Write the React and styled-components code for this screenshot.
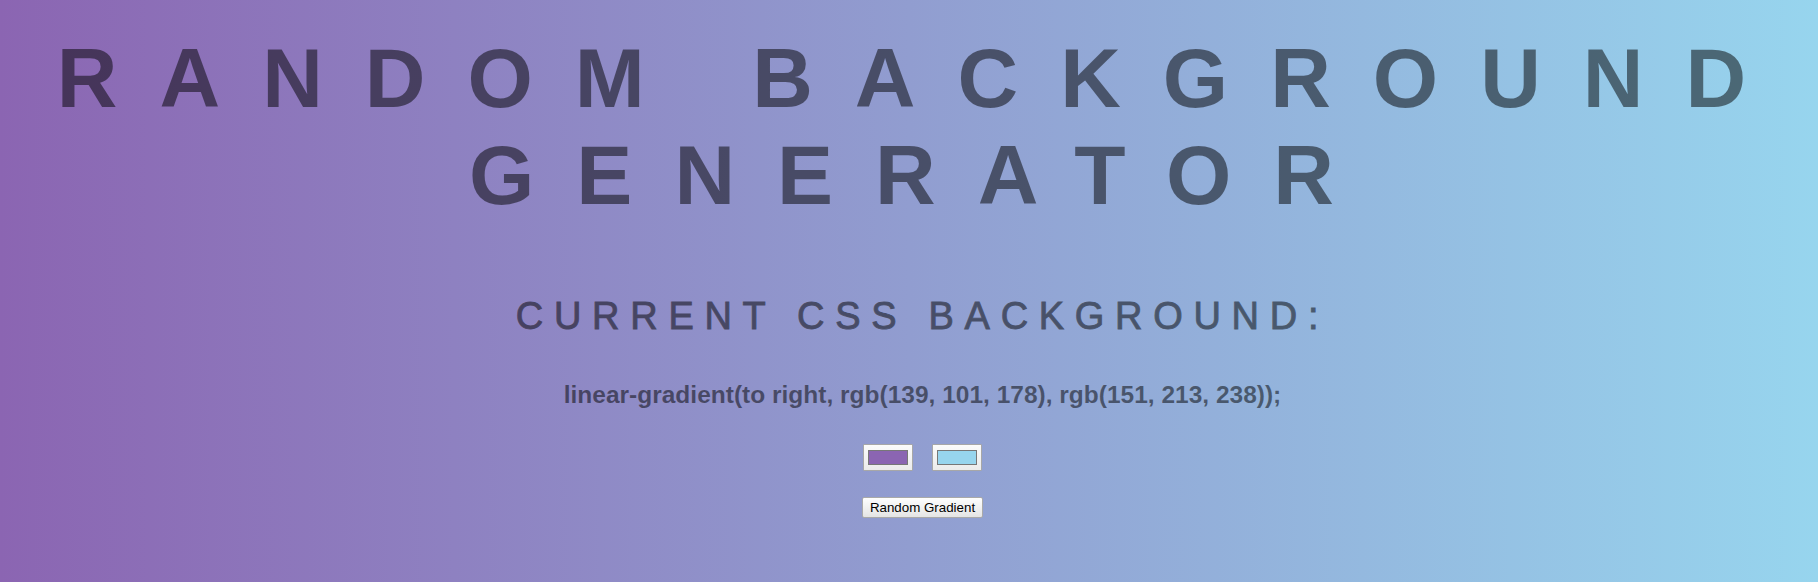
import React, { useState } from "react";
import styled, { createGlobalStyle } from "styled-components";

const GlobalStyle = createGlobalStyle`
  html, body {
    margin: 0;
    padding: 0;
  }
  body {
    font-family: "Liberation Sans", Arial, sans-serif;
  }
`;

const Page = styled.div`
  min-height: 582px;
  box-sizing: border-box;
  padding: 30px 0 0 27px;
  display: flex;
  flex-direction: column;
  align-items: center;
  background: ${(p) => p.$bg};
  color: rgba(0, 0, 0, 0.5);
  font-family: "Liberation Sans", Arial, sans-serif;
`;

const Title = styled.h1`
  margin: 0;
  width: 100%;
  text-align: center;
  font-size: 84px;
  font-weight: 700;
  line-height: normal;
  letter-spacing: 0.5em;
  text-transform: uppercase;
`;

const Subtitle = styled.h3`
  margin: 71px 0 0;
  font-size: 38px;
  font-weight: 400;
  line-height: normal;
  letter-spacing: 10.7px;
  text-transform: uppercase;
  color: #000;
  -webkit-text-stroke: 0.9px #000;
  opacity: 0.5;
`;

const Code = styled.p`
  margin: 43px 0 0;
  font-size: 24.5px;
  font-weight: 700;
  line-height: normal;
`;

const Pickers = styled.div`
  margin-top: 35px;
  display: flex;
  gap: 19px;
`;

const ColorInput = styled.input`
  -webkit-appearance: none;
  appearance: none;
  box-sizing: border-box;
  width: 50px;
  height: 27px;
  margin: 0;
  padding: 0;
  border: 1px solid #a7a7a7;
  border-radius: 1px;
  background: linear-gradient(#fbfbfb, #ebebeb);
  cursor: pointer;

  &::-webkit-color-swatch-wrapper {
    padding: 5px 4px;
  }
  &::-webkit-color-swatch {
    border: 1px solid #777777;
    border-radius: 0;
  }
`;

const Button = styled.button`
  margin-top: 26px;
  box-sizing: border-box;
  height: 21px;
  padding: 0 7px;
  border: 1px solid #a9a9a9;
  border-radius: 2px;
  background: linear-gradient(#fefefe, #e4e4e4);
  color: #000;
  font-family: "Liberation Sans", Arial, sans-serif;
  font-size: 13.33px;
  line-height: 1;
  cursor: pointer;
`;

const toRgb = (hex) => {
  const n = parseInt(hex.slice(1), 16);
  return `rgb(${(n >> 16) & 255}, ${(n >> 8) & 255}, ${n & 255})`;
};

const randomHex = () =>
  "#" +
  Math.floor(Math.random() * 0xffffff)
    .toString(16)
    .padStart(6, "0");

export default function App() {
  const [c1, setC1] = useState("#8b65b2");
  const [c2, setC2] = useState("#97d5ee");
  const bg = `linear-gradient(to right, ${toRgb(c1)}, ${toRgb(c2)})`;

  return (
    <>
      <GlobalStyle />
      <Page $bg={bg}>
        <Title>Random Background Generator</Title>
        <Subtitle>Current CSS Background:</Subtitle>
        <Code>{bg};</Code>
        <Pickers>
          <ColorInput type="color" value={c1} onChange={(e) => setC1(e.target.value)} />
          <ColorInput type="color" value={c2} onChange={(e) => setC2(e.target.value)} />
        </Pickers>
        <Button
          onClick={() => {
            setC1(randomHex());
            setC2(randomHex());
          }}
        >
          Random Gradient
        </Button>
      </Page>
    </>
  );
}
